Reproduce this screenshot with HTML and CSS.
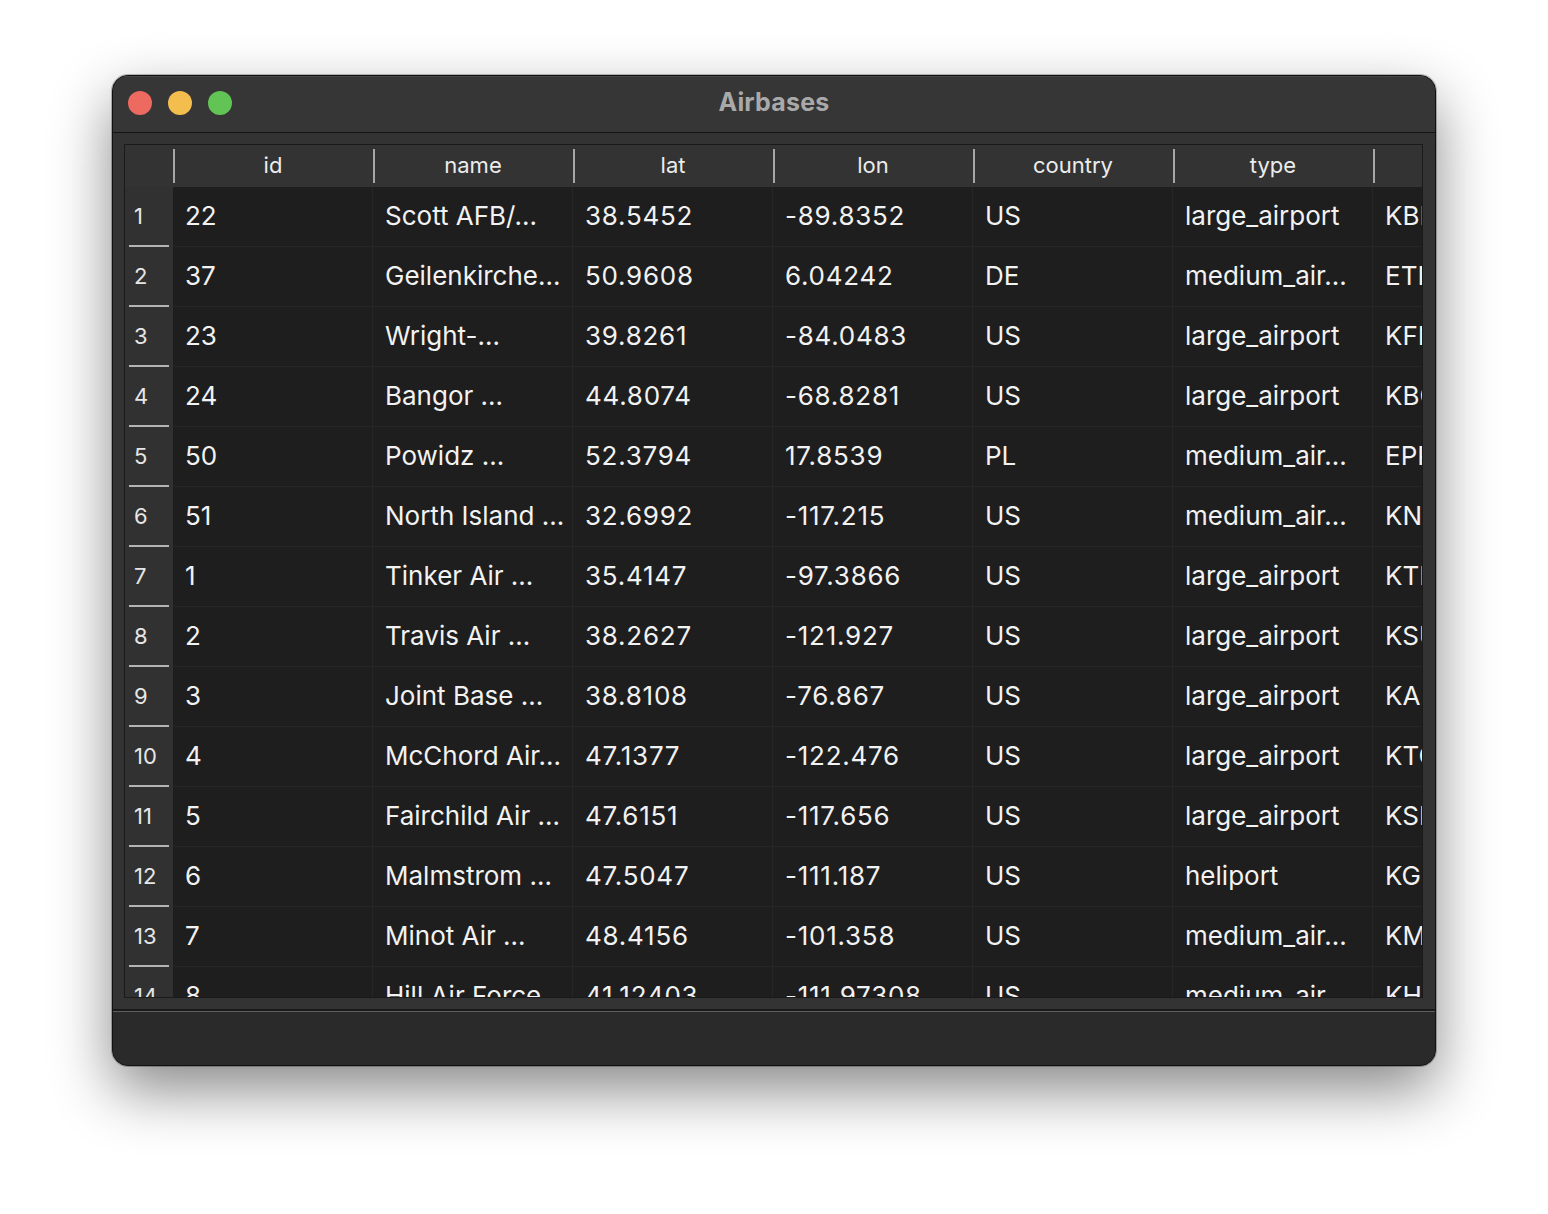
FILE: index.html
```html
<!DOCTYPE html>
<html lang="en">
<head>
<meta charset="utf-8">
<title>Airbases</title>
<link rel="stylesheet" href="styles.css">
</head>
<body>
<div class="stage">
  <div class="window">
    <div class="titlebar">
      <div class="lights">
        <span class="light red"></span>
        <span class="light yellow"></span>
        <span class="light green"></span>
      </div>
      <div class="title">Airbases</div>
      <div class="spacer"></div>
    </div>
    <div class="content">
      <div class="table">
        <div class="row head">
          <div class="corner"></div>
          <div class="th">id</div>
          <div class="th">name</div>
          <div class="th">lat</div>
          <div class="th">lon</div>
          <div class="th">country</div>
          <div class="th">type</div>
          <div class="th"></div>
        </div>
        <div class="row"><div class="rn">1</div><div class="td">22</div><div class="td">Scott AFB/...</div><div class="td num">38.5452</div><div class="td num">-89.8352</div><div class="td">US</div><div class="td">large_airport</div><div class="td">KBLV</div></div>
        <div class="row"><div class="rn">2</div><div class="td">37</div><div class="td">Geilenkirche...</div><div class="td num">50.9608</div><div class="td num">6.04242</div><div class="td">DE</div><div class="td">medium_air...</div><div class="td">ETNG</div></div>
        <div class="row"><div class="rn">3</div><div class="td">23</div><div class="td">Wright-...</div><div class="td num">39.8261</div><div class="td num">-84.0483</div><div class="td">US</div><div class="td">large_airport</div><div class="td">KFFO</div></div>
        <div class="row"><div class="rn">4</div><div class="td">24</div><div class="td">Bangor ...</div><div class="td num">44.8074</div><div class="td num">-68.8281</div><div class="td">US</div><div class="td">large_airport</div><div class="td">KBGR</div></div>
        <div class="row"><div class="rn">5</div><div class="td">50</div><div class="td">Powidz ...</div><div class="td num">52.3794</div><div class="td num">17.8539</div><div class="td">PL</div><div class="td">medium_air...</div><div class="td">EPPW</div></div>
        <div class="row"><div class="rn">6</div><div class="td">51</div><div class="td">North Island ...</div><div class="td num">32.6992</div><div class="td num">-117.215</div><div class="td">US</div><div class="td">medium_air...</div><div class="td">KNZY</div></div>
        <div class="row"><div class="rn">7</div><div class="td">1</div><div class="td">Tinker Air ...</div><div class="td num">35.4147</div><div class="td num">-97.3866</div><div class="td">US</div><div class="td">large_airport</div><div class="td">KTIK</div></div>
        <div class="row"><div class="rn">8</div><div class="td">2</div><div class="td">Travis Air ...</div><div class="td num">38.2627</div><div class="td num">-121.927</div><div class="td">US</div><div class="td">large_airport</div><div class="td">KSUU</div></div>
        <div class="row"><div class="rn">9</div><div class="td">3</div><div class="td">Joint Base ...</div><div class="td num">38.8108</div><div class="td num">-76.867</div><div class="td">US</div><div class="td">large_airport</div><div class="td">KADW</div></div>
        <div class="row"><div class="rn">10</div><div class="td">4</div><div class="td">McChord Air...</div><div class="td num">47.1377</div><div class="td num">-122.476</div><div class="td">US</div><div class="td">large_airport</div><div class="td">KTCM</div></div>
        <div class="row"><div class="rn">11</div><div class="td">5</div><div class="td">Fairchild Air ...</div><div class="td num">47.6151</div><div class="td num">-117.656</div><div class="td">US</div><div class="td">large_airport</div><div class="td">KSKA</div></div>
        <div class="row"><div class="rn">12</div><div class="td">6</div><div class="td">Malmstrom ...</div><div class="td num">47.5047</div><div class="td num">-111.187</div><div class="td">US</div><div class="td">heliport</div><div class="td">KGFA</div></div>
        <div class="row"><div class="rn">13</div><div class="td">7</div><div class="td">Minot Air ...</div><div class="td num">48.4156</div><div class="td num">-101.358</div><div class="td">US</div><div class="td">medium_air...</div><div class="td">KMIB</div></div>
        <div class="row"><div class="rn">14</div><div class="td">8</div><div class="td">Hill Air Force</div><div class="td num">41.12403</div><div class="td num">-111.97308</div><div class="td">US</div><div class="td">medium_air...</div><div class="td">KHIF</div></div>
      </div>
    </div>
    <div class="bottombar"></div>
  </div>
</div>
</body>
</html>
```

FILE: styles.css
```css
* { box-sizing: border-box; }

html, body {
  margin: 0;
  padding: 0;
  background: #ffffff;
}

body {
  font-family: Inter, "Noto Sans", "Liberation Sans", sans-serif;
}

.stage {
  padding: 75px 112px 0 112px;
  height: 1214px;
  overflow: hidden;
}

.window {
  width: 1324px;
  height: 991px;
  border: 1px solid #111111;
  border-radius: 16px;
  overflow: hidden;
  background: #2b2b2b;
  box-shadow: 0 24px 60px rgba(0, 0, 0, 0.47), 0 0 0 1px rgba(0,0,0,0.25);
  display: flex;
  flex-direction: column;
}

.titlebar {
  height: 57px;
  flex: none;
  background: #363636;
  border-bottom: 1px solid #141414;
  box-shadow: inset 0 1px 0 rgba(255,255,255,0.08);
  display: grid;
  grid-template-columns: 1fr auto 1fr;
  align-items: center;
}

.lights {
  display: flex;
  gap: 16px;
  align-items: center;
  padding-left: 15px;
  padding-bottom: 2px;
}

.light {
  width: 24px;
  height: 24px;
  border-radius: 50%;
  display: block;
}
.red { background: #ec6a5f; }
.yellow { background: #f4be4f; }
.green { background: #61c454; }

.title {
  color: #a9a9a9;
  font-weight: 700;
  font-size: 25px;
  letter-spacing: 0.2px;
  padding-bottom: 4px;
}

.content {
  flex: none;
  height: 878px;
  background: #333333;
  padding: 11px 12px 11px 11px;
  border-bottom: 2px solid #1a1a1a;
}

.table {
  width: 1299px;
  height: 854px;
  border: 1px solid #1a1a1a;
  background: #1e1e1e;
  overflow: hidden;
}

.row {
  display: grid;
  grid-template-columns: 48px repeat(7, 200px);
  height: 60px;
  color: #f2f2f2;
}

.row.head {
  height: 42px;
  background: #333333;
}

.corner {
  background: #333333;
}

.th {
  position: relative;
  display: flex;
  align-items: center;
  justify-content: center;
  font-size: 22px;
  color: #ececec;
  white-space: nowrap;
  padding-bottom: 3px;
}

.th::before {
  content: "";
  position: absolute;
  left: 0;
  top: 4px;
  bottom: 4px;
  width: 2px;
  background: #a6a6a6;
}

.rn {
  position: relative;
  background: #313131;
  font-size: 22px;
  color: #e6e6e6;
  display: flex;
  align-items: center;
  padding-left: 9px;
  padding-bottom: 2px;
}

.rn::after {
  content: "";
  position: absolute;
  left: 4px;
  right: 4px;
  bottom: 0;
  height: 2px;
  background: #b4b4b4;
}

.td {
  font-size: 26px;
  display: flex;
  align-items: center;
  padding-left: 12px;
  padding-bottom: 3px;
  white-space: nowrap;
  overflow: hidden;
  border-right: 1px solid #262626;
  border-bottom: 1px solid #262626;
}

.td.num {
  letter-spacing: 0.75px;
}

.bottombar {
  flex: 1;
  background: #2a2a2a;
  border-top: 1px solid #5e5e5e;
}
```
